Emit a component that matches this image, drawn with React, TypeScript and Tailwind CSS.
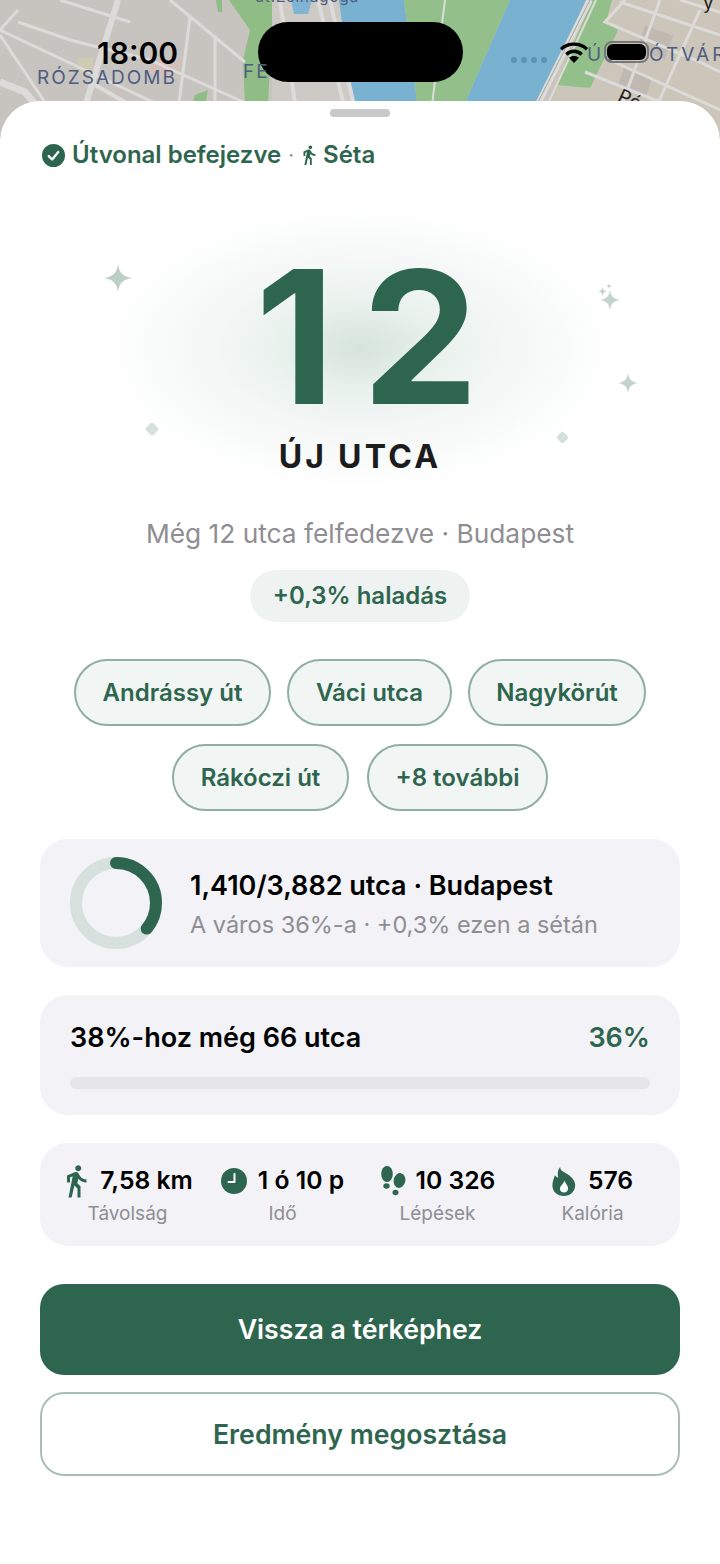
import React from "react";
import { MdDirectionsWalk } from "react-icons/md";

function MapArt() {
  const roads: [string, number][] = [
    ["M118 0 L84 110", 6],
    ["M0 30 L18 10 M18 22 L70 40 L150 60 L250 105", 3],
    ["M0 30 L170 110 M0 35 L50 110", 3],
    ["M60 0 L130 22", 3],
    ["M170 0 L245 62 M190 18 L178 110 M215 35 L215 110", 3],
    ["M0 82 L25 92 L40 110", 7],
    ["M90 82 L130 105", 4],
    ["M280 0 L296 110 M318 0 L345 110 M330 0 L355 110", 4],
    ["M445 0 L432 105", 2],
    ["M590 0 L535 110", 6],
    ["M596 0 L545 110", 2],
    ["M625 0 L605 22 L700 62 L720 72", 3],
    ["M660 0 L620 110 M700 10 L655 110 M610 60 L720 110 M585 72 L680 110", 3],
    ["M620 2 L720 35 M680 0 L720 12", 3],
  ];
  return (
    <svg viewBox="0 0 720 140" className="block h-[140px] w-[720px] blur-[0.5px]" aria-hidden="true">
      <rect width="720" height="140" fill="#c7c4c0" />
      <path d="M229 0 L272 0 L272 30 L268 105 L245 105 L243 60 L250 30 Z" fill="#8fbd85" />
      <path d="M195 95 L208 90 L205 105 L192 105 Z" fill="#8fbd85" />
      <path d="M216 0 L222 0 L222 12 L218 12 Z" fill="#8fbd85" />
      <path d="M272 0 L339 0 L353 110 L272 110 Z" fill="#cdcac5" />
      <path d="M291 0 L312 0 L308 14 L294 14 Z" fill="#7fb5d3" />
      <path d="M339 0 L404 0 L418 110 L354 110 Z" fill="#79b1d1" />
      <path d="M404 0 L510 0 L462 110 L418 110 Z" fill="#93c08a" />
      <path d="M510 0 L586 0 L536 110 L462 110 Z" fill="#79b1d1" />
      <path d="M586 0 L720 0 L720 140 L532 140 Z" fill="#cbc6b9" />
      <path d="M592 0 L612 0 L606 22 L618 30 L590 88 L556 85 Z" fill="#93c08a" />
      <rect x="640" y="30" width="30" height="25" fill="#bfb9b1" transform="rotate(20 655 42)" />
      <rect x="620" y="72" width="30" height="20" fill="#bfb9b1" transform="rotate(20 635 82)" />
      <rect x="78" y="58" width="15" height="15" fill="#cfcbb2" />
      <rect x="150" y="60" width="30" height="14" fill="#d4bfb9" />
      {roads.map(([d, w], i) => (
        <path key={i} d={d} fill="none" stroke="#dddbd9" strokeWidth={w} />
      ))}
      <path d="M534 110 L590 0" stroke="#a7a5a0" strokeWidth="1" />
    </svg>
  );
}

function Sparkle({ className, fill = "#bccfc7" }: { className: string; fill?: string }) {
  return (
    <svg viewBox="0 0 24 24" className={className} aria-hidden="true">
      <path d="M12 0 C13 7 15.5 10.5 24 12 C15.5 13.5 13 17 12 24 C11 17 8.5 13.5 0 12 C8.5 10.5 11 7 12 0 Z" fill={fill} />
    </svg>
  );
}

function CheckBadge() {
  return (
    <svg viewBox="0 0 24 24" className="h-[23px] w-[23px] shrink-0" aria-hidden="true">
      <circle cx="12" cy="12" r="12" fill="#2e654e" />
      <path d="M7 12.6 L10.6 16.2 L17 8.4" fill="none" stroke="#fff" strokeWidth="2.4" strokeLinecap="round" strokeLinejoin="round" />
    </svg>
  );
}

function Clock() {
  return (
    <svg viewBox="0 0 26 26" className="h-[26px] w-[26px]" aria-hidden="true">
      <circle cx="13" cy="13" r="13" fill="#2e654e" />
      <path d="M13.5 6 V14 H7.5" fill="none" stroke="#fff" strokeWidth="2" strokeLinecap="round" strokeLinejoin="round" />
    </svg>
  );
}

function Steps() {
  return (
    <svg viewBox="0 0 26 30" className="h-[30px] w-[26px]" aria-hidden="true">
      <g fill="#2e654e">
        <ellipse cx="7" cy="8" rx="5.8" ry="8" />
        <ellipse cx="6.5" cy="20" rx="3.2" ry="2.8" />
        <ellipse cx="19.5" cy="14.5" rx="5.8" ry="7.5" transform="rotate(12 19.5 14.5)" />
        <ellipse cx="15.5" cy="26.5" rx="3" ry="2.8" />
      </g>
    </svg>
  );
}

function Flame() {
  return (
    <svg viewBox="0 0 24 30" className="h-[29px] w-[24px]" aria-hidden="true">
      <path d="M8 0 C8 4 12 5 16.5 8 C21.5 11.5 24 15.5 23.5 20 C23 26 18 30 12 30 C5 30 0 25.5 0 19.5 C0 15 1.5 12 2.5 8.5 C4 10 5 11 6 11 C5 7 5.5 3 8 0 Z" fill="#2e654e" />
      <path d="M12.5 14 C13 17 16.5 19 16.2 22.5 C16 25 14.5 26.4 12 26.4 C9.5 26.4 7.8 24.8 7.8 22.5 C7.8 19.5 11.5 18 12.5 14 Z" fill="#fff" />
    </svg>
  );
}

function Chip({ label, w }: { label: string; w: string }) {
  return (
    <div className={`flex h-[67px] items-center justify-center rounded-full border-2 border-[#91aea2] bg-[#f1f6f4] text-[24px] font-[560] text-[#2e654e] ${w}`}>
      {label}
    </div>
  );
}

function Stat({ icon, value, label, gap }: { icon: React.ReactNode; value: string; label: string; gap: string }) {
  return (
    <div className="flex flex-1 flex-col items-center">
      <div className={`flex h-[34px] items-center ${gap}`}>
        {icon}
        <span className="whitespace-nowrap text-[24.7px] font-[560] text-black">{value}</span>
      </div>
      <span className="mt-[1px] text-[19px] leading-[30px] text-[#8e8e93]">{label}</span>
    </div>
  );
}

export default function App() {
  return (
    <div className="relative h-[1564px] w-[720px] overflow-hidden bg-white font-['Inter',sans-serif]">
      <div className="relative h-[140px] w-full">
        <MapArt />
        <div className="absolute left-[258px] top-[22px] h-[60px] w-[205px] rounded-[30px] bg-black" />
        <span className="absolute left-[97px] top-[35px] text-[30px] font-semibold leading-[36px] text-black">18:00</span>
        <span className="absolute left-[37px] top-[66px] text-[19px] leading-[24px] tracking-[2px] text-[#4f5d80]">RÓZSADOMB</span>
        <span className="absolute left-[243px] top-[60px] text-[19px] leading-[24px] tracking-[2px] text-[#4f5d80]">FE</span>
        <span className="absolute left-[587px] top-[43px] whitespace-nowrap text-[19px] leading-[24px] tracking-[3px] text-[#4f5d80]">ÚJ</span>
        <span className="absolute left-[649px] top-[43px] whitespace-nowrap text-[19px] leading-[24px] tracking-[3px] text-[#4f5d80]">ÓTVÁR</span>
        <span className="absolute left-[255px] -top-[13px] text-[15px] leading-[20px] tracking-[1px] text-[#4f5d80]">ut.Zsinagóga</span>
        <span className="absolute left-[618px] top-[88px] rotate-[25deg] text-[19px] leading-[24px] text-[#222]">Pó</span>
        <span className="absolute left-[703px] -top-[9px] text-[19px] leading-[24px] text-[#222]">y</span>
        <div className="absolute left-[511px] top-[57px] flex gap-[4px]">
          <i className="block h-[6px] w-[6px] rounded-full bg-[#5b93b0]" />
          <i className="block h-[6px] w-[6px] rounded-full bg-[#5b93b0]" />
          <i className="block h-[6px] w-[6px] rounded-full bg-[#5b93b0]" />
          <i className="block h-[6px] w-[6px] rounded-full bg-[#5b93b0]" />
        </div>
        <svg viewBox="0 0 30 24" className="absolute left-[559px] top-[41px] h-[23px] w-[30px]" aria-hidden="true">
          <path d="M1.5 8.5 C9 1.5 21 1.5 28.5 8.5" fill="none" stroke="#000" strokeWidth="3.6" />
          <path d="M7 14 C11.5 9.5 18.5 9.5 23 14" fill="none" stroke="#000" strokeWidth="3.6" />
          <path d="M15 23 L9.8 17.6 C12.5 15 17.5 15 20.2 17.6 Z" fill="#000" />
        </svg>
        <div className="absolute left-[604px] top-[41px] flex h-[22px] w-[45px] items-center justify-center rounded-[8px] border-2 border-[#77777a]">
          <div className="h-[16px] w-[39px] rounded-[6px] bg-black" />
        </div>
      </div>

      <div className="relative z-10 -mt-[39px] flex flex-col rounded-t-[40px] bg-white px-[40px]">
        <div className="mx-auto mt-[8px] h-[8px] w-[60px] rounded-full bg-[#c9c9cb]" />

        <div className="mt-[23px] flex h-[30px] items-center text-[24px] font-[560] text-[#2e654e]">
          <span className="ml-[2px]"><CheckBadge /></span>
          <span className="ml-[7px]">Útvonal befejezve</span>
          <span className="ml-[7px] text-[20px] font-normal text-[#8e8e93]">·</span>
          <MdDirectionsWalk className="ml-[4px] h-[22px] w-[22px] text-[#2e654e]" />
          <span className="ml-[3px]">Séta</span>
        </div>

        <div className="relative mt-[38px] h-[286px]">
          <div className="absolute left-[60px] top-[-3px] h-[285px] w-[520px] bg-[radial-gradient(ellipse_closest-side,#d6e3dd_0%,#e9f1ed_30%,#f5f8f7_62%,#ffffff_100%)]" />
          <Sparkle className="absolute left-[64px] top-[56px] h-[28px] w-[28px]" />
          <Sparkle className="absolute left-[560px] top-[82px] h-[20px] w-[20px]" fill="#c3d4cd" />
          <Sparkle className="absolute left-[558px] top-[79px] h-[9px] w-[9px]" fill="#c3d4cd" />
          <Sparkle className="absolute left-[566px] top-[75px] h-[6px] w-[6px]" fill="#c3d4cd" />
          <Sparkle className="absolute left-[578px] top-[165px] h-[20px] w-[20px]" fill="#c3d4cd" />
          <div className="absolute left-[107px] top-[216px] h-[10px] w-[10px] rotate-45 rounded-[2px] bg-[#d4e0db]" />
          <div className="absolute left-[518px] top-[225px] h-[9px] w-[9px] rotate-45 rounded-[2px] bg-[#d4e0db]" />
          <div className="relative flex flex-col items-center">
            <div className="mt-[36px] pl-[41px] text-[185px] font-[690] leading-[186px] tracking-[27px] text-[#2e654e]">12</div>
            <div className="mt-[7px] text-[32px] font-bold leading-[40px] tracking-[3.2px] text-[#1c1c1e]">ÚJ UTCA</div>
          </div>
        </div>

        <div className="mt-[23px] text-center text-[26.3px] leading-[34px] text-[#8e8e93]">Még 12 utca felfedezve · Budapest</div>

        <div className="mx-auto mt-[19px] flex h-[52px] w-[220px] items-center justify-center rounded-full bg-[#eef3f1] text-[24px] font-[560] text-[#2e654e]">
          +0,3% haladás
        </div>

        <div className="mt-[37px] flex justify-center gap-[16px]">
          <Chip label="Andrássy út" w="w-[197px]" />
          <Chip label="Váci utca" w="w-[165px]" />
          <Chip label="Nagykörút" w="w-[178px]" />
        </div>
        <div className="mt-[18px] flex justify-center gap-[18px]">
          <Chip label="Rákóczi út" w="w-[177px]" />
          <Chip label="+8 további" w="w-[181px]" />
        </div>

        <div className="mt-[28px] flex h-[128px] items-center rounded-[28px] bg-[#f2f2f7] pl-[30px]">
          <svg viewBox="0 0 92 92" className="h-[92px] w-[92px] shrink-0" aria-hidden="true">
            <circle cx="46" cy="46" r="40" fill="none" stroke="#d6e0dd" strokeWidth="12" />
            <circle cx="46" cy="46" r="40" fill="none" stroke="#2e654e" strokeWidth="12" strokeLinecap="round" strokeDasharray="90.5 251.3" transform="rotate(-90 46 46)" />
          </svg>
          <div className="ml-[28px] flex flex-col pt-[3px]">
            <span className="text-[27px] font-[560] leading-[36px] text-black">1,410/3,882 utca · Budapest</span>
            <span className="mt-[4px] text-[23.5px] leading-[34px] text-[#8e8e93]">A város 36%-a · +0,3% ezen a sétán</span>
          </div>
        </div>

        <div className="mt-[28px] flex h-[120px] flex-col rounded-[28px] bg-[#f2f2f7] px-[30px] pt-[25px]">
          <div className="flex h-[36px] items-center justify-between text-[27px] font-[560]">
            <span className="text-black">38%-hoz még 66 utca</span>
            <span className="text-[#2e654e]">36%</span>
          </div>
          <div className="mt-[21px] h-[12px] w-full rounded-full bg-[#e5e5ea]" />
        </div>

        <div className="mt-[28px] flex h-[103px] items-start rounded-[28px] bg-[#f2f2f7] px-[10px] pt-[21px]">
          <Stat icon={<MdDirectionsWalk className="-ml-[4px] h-[36px] w-[36px] text-[#2e654e]" />} value="7,58 km" label="Távolság" gap="gap-[6px]" />
          <Stat icon={<Clock />} value="1 ó 10 p" label="Idő" gap="gap-[11px]" />
          <Stat icon={<Steps />} value="10 326" label="Lépések" gap="gap-[10px]" />
          <Stat icon={<Flame />} value="576" label="Kalória" gap="gap-[12px]" />
        </div>

        <div className="mt-[38px] flex h-[91px] items-center justify-center rounded-[24px] bg-[#2e654e] text-[26.7px] font-[560] text-white">
          Vissza a térképhez
        </div>
        <div className="mt-[17px] flex h-[84px] items-center justify-center rounded-[24px] border-2 border-[#a9bfb6] bg-white text-[26.7px] font-[560] text-[#2e654e]">
          Eredmény megosztása
        </div>
      </div>
    </div>
  );
}
